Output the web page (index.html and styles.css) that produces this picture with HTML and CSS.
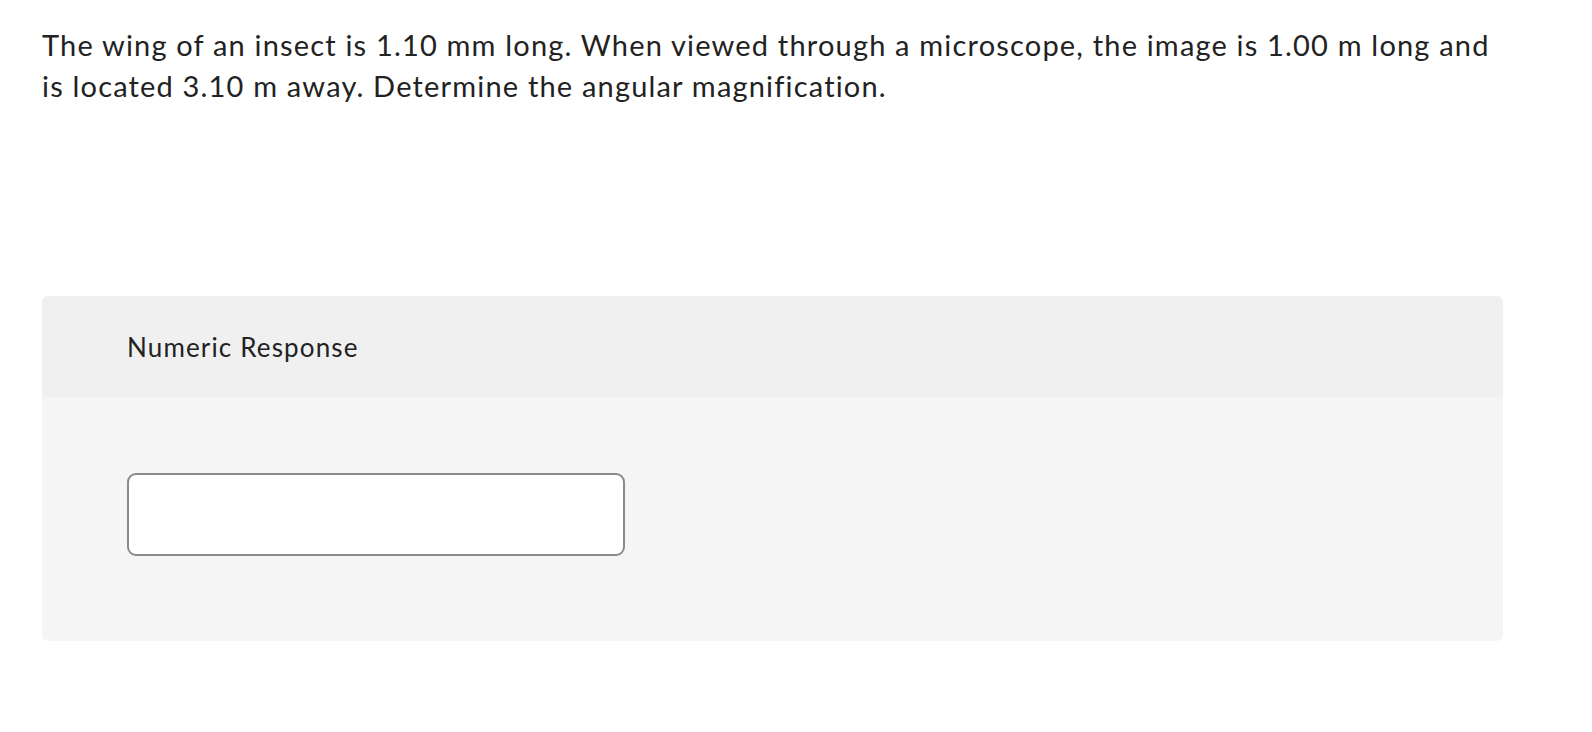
FILE: index.html
```html
<!DOCTYPE html>
<html lang="en">
<head>
<meta charset="utf-8">
<title>Numeric Response</title>
<link rel="stylesheet" href="styles.css">
</head>
<body>
<main class="page">
  <p class="question">The wing of an insect is 1.10 mm long. When viewed through a microscope, the image is 1.00 m long and is located 3.10 m away. Determine the angular magnification.</p>
  <section class="response">
    <header class="response-head">Numeric Response</header>
    <div class="response-body">
      <input class="answer" type="text" aria-label="Numeric Response">
    </div>
  </section>
</main>
</body>
</html>
```
FILE: styles.css
```css
html, body {
  margin: 0;
  padding: 0;
  background: #ffffff;
}
body {
  font-family: Lato, "Open Sans", "Liberation Sans", sans-serif;
  color: #222222;
}
.page {
  padding: 24px 89px 0 42px;
}
.question {
  margin: 0;
  font-size: 29px;
  letter-spacing: 1.18px;
  line-height: 41px;
  width: 1461px;
}
.response {
  margin-top: 190px;
  width: 1461px;
  border-radius: 6px;
  overflow: hidden;
  background: #f5f5f5;
}
.response-head {
  background: #f0f0f0;
  height: 101px;
  box-sizing: border-box;
  padding-left: 85px;
  display: flex;
  align-items: center;
  font-size: 26px;
  letter-spacing: 1.15px;
}
.response-body {
  padding: 76px 85px 85px;
}
.answer {
  display: block;
  box-sizing: border-box;
  width: 498px;
  height: 83px;
  border: 2px solid #8a8a8a;
  border-radius: 9px;
  background: #ffffff;
  margin: 0;
  padding: 0 16px;
  font: inherit;
  font-size: 26px;
  outline: none;
}
```
